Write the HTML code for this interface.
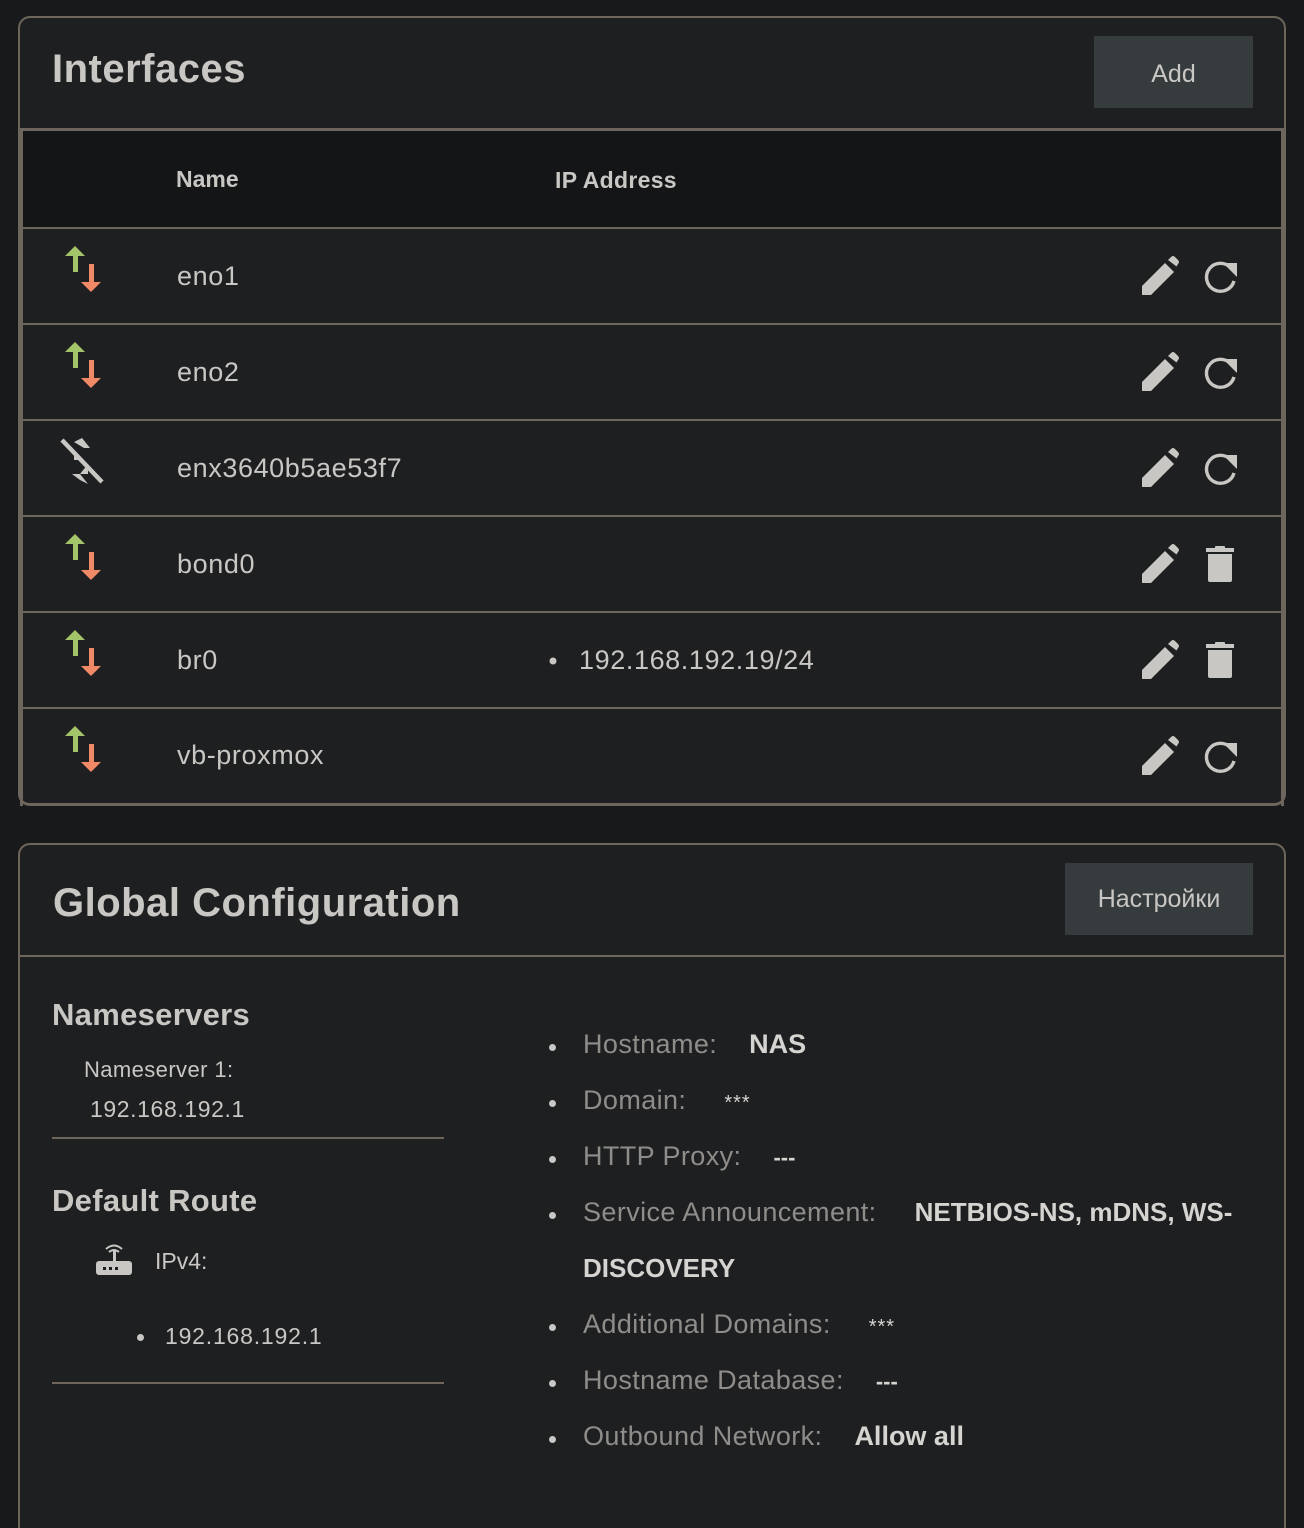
<!DOCTYPE html>
<html><head><meta charset="utf-8"><style>
*{box-sizing:border-box;margin:0;padding:0}
html{width:1304px;height:1528px;overflow:hidden}
body{width:1304px;height:1528px;background:#18191b;font-family:"Liberation Sans",sans-serif;color:#c9c7c4;position:relative;overflow:hidden}
.panel{position:absolute;left:18px;width:1268px;background:#1e1f21;border:2px solid #6e665c;border-radius:12px}
.abs{position:absolute}
.btn{position:absolute;background:#363b3d;color:#c9c7c4;font-size:25px;display:flex;align-items:center;justify-content:center}
.lbl{color:#8f8d8a;letter-spacing:0.4px}
.val{color:#d6d4d1;font-weight:bold}
.li{position:absolute;left:535px;font-size:27px}
.li:before{content:"";position:absolute;left:-34px;top:15px;width:7px;height:7px;border-radius:50%;background:#c9c7c4}
</style></head><body>
<div class="panel" style="top:16px;height:790px;border-bottom-width:3px">
  <div class="abs" style="left:32px;top:29px;font-size:40px;font-weight:bold;color:#c9c7c4;letter-spacing:0.5px">Interfaces</div>
  <div class="btn" style="left:1074px;top:18px;width:159px;height:72px;padding-top:4px">Add</div>
  <div class="abs" style="left:0;top:110px;width:1264px;height:100px;background:#141517;border-top:3px solid #6e665c"></div>
  <div class="abs" style="left:156px;top:148px;font-size:23px;font-weight:bold">Name</div>
  <div class="abs" style="left:535px;top:149px;font-size:23px;font-weight:bold;letter-spacing:0.3px">IP Address</div>
  <div class="abs" style="left:0;top:110px;width:3px;height:678px;background:#6e665c"></div>
  <div class="abs" style="right:0;top:110px;width:3px;height:678px;background:#6e665c"></div>
</div>
<svg width="0" height="0" style="position:absolute">
 <defs>
  <g id="ud"><path d="M10 0 L20 10 H13 V26 H8 V10 H0Z" fill="#a4c46a" transform="translate(-2,0)"/><path d="M26 46 L36 36 H29 V18 H24 V36 H16Z" fill="#f08a66" transform="translate(-2,0)"/></g>
  <g id="pen" fill="#c9c7c4"><path d="M0 36 V27 L23 4 L32 13 L9 36Z"/><path d="M26 1 L29 -2 Q31 -4 33 -2 L36 1 Q38 3 36 5 L34.5 7.5Z"/></g>
  <g id="ref"><path d="M28 8 A14 14 0 1 0 31 21" fill="none" stroke="#c9c7c4" stroke-width="3.4"/><path d="M20 3 H34 V17Z" fill="#c9c7c4"/></g>
  <g id="trash" fill="#c9c7c4"><rect x="0" y="2" width="28" height="4"/><rect x="9" y="0" width="10" height="3" rx="1"/><path d="M2 8 H26 V34 Q26 36 24 36 H4 Q2 36 2 34Z"/></g>
 </defs>
</svg>
<svg class="abs" style="left:0;top:0" width="1304" height="810">
 <rect x="21" y="227" width="1262" height="2" fill="#6e665c"/>
 <rect x="21" y="323" width="1262" height="2" fill="#6e665c"/>
 <rect x="21" y="419" width="1262" height="2" fill="#6e665c"/>
 <rect x="21" y="515" width="1262" height="2" fill="#6e665c"/>
 <rect x="21" y="611" width="1262" height="2" fill="#6e665c"/>
 <rect x="21" y="707" width="1262" height="2" fill="#6e665c"/>
 <use href="#ud" x="67" y="246"/>
 <use href="#ud" x="67" y="342"/>
 <g transform="translate(60,438)" fill="#c9c7c4"><path d="M2 2 L42 44" stroke="#c9c7c4" stroke-width="4.5"/><path d="M14 4 L22 0 L30 10 H24Z"/><path d="M14 12 V22 H22Z"/><path d="M28 26 V36 H20Z"/><path d="M12 36 H20 L28 46 L20 42Z"/></g>
 <use href="#ud" x="67" y="534"/>
 <use href="#ud" x="67" y="630"/>
 <use href="#ud" x="67" y="726"/>
 <g font-size="27" fill="#c9c7c4" font-family="Liberation Sans" letter-spacing="0.6">
  <text x="177" y="285">eno1</text><text x="177" y="381">eno2</text><text x="177" y="477">enx3640b5ae53f7</text>
  <text x="177" y="573">bond0</text><text x="177" y="669">br0</text><text x="177" y="764">vb-proxmox</text>
  <text x="579" y="669">192.168.192.19/24</text>
 </g>
 <circle cx="553" cy="661" r="3.5" fill="#c9c7c4"/>
 <use href="#pen" x="1142" y="259"/><use href="#pen" x="1142" y="355"/><use href="#pen" x="1142" y="451"/>
 <use href="#pen" x="1142" y="547"/><use href="#pen" x="1142" y="643"/><use href="#pen" x="1142" y="739"/>
 <use href="#ref" x="1203" y="260"/><use href="#ref" x="1203" y="356"/><use href="#ref" x="1203" y="452"/>
 <use href="#trash" x="1206" y="546"/><use href="#trash" x="1206" y="642"/>
 <use href="#ref" x="1203" y="740"/>
</svg>

<div class="panel" style="top:843px;height:700px">
  <div class="abs" style="left:33px;top:36px;font-size:40px;font-weight:bold;color:#c9c7c4;letter-spacing:0.5px">Global Configuration</div>
  <div class="btn" style="left:1045px;top:18px;width:188px;height:72px">Настройки</div>
  <div class="abs" style="left:0;top:110px;width:1264px;height:2px;background:#6e665c"></div>
  <div class="abs" style="left:32px;top:152px;font-size:31px;font-weight:bold;letter-spacing:0.3px">Nameservers</div>
  <div class="abs" style="left:64px;top:212px;font-size:22px;letter-spacing:0.4px">Nameserver 1:</div>
  <div class="abs" style="left:70px;top:251px;font-size:23px;letter-spacing:0.6px">192.168.192.1</div>
  <div class="abs" style="left:32px;top:292px;width:392px;height:2px;background:#6e665c"></div>
  <div class="abs" style="left:32px;top:338px;font-size:31px;font-weight:bold;letter-spacing:0.3px">Default Route</div>
  <svg class="abs" style="left:75px;top:396px" width="40" height="40"><g fill="#c9c7c4"><rect x="1" y="20" width="36" height="14" rx="3"/><rect x="18" y="10" width="3" height="11"/><path d="M11 8 Q19 1 27 8" stroke="#c9c7c4" stroke-width="2" fill="none"/><path d="M14 11 Q19 7 24 11" stroke="#c9c7c4" stroke-width="2" fill="none"/></g><g fill="#1e1f21"><rect x="8" y="26" width="3" height="3"/><rect x="14" y="26" width="3" height="3"/><rect x="20" y="26" width="3" height="3"/></g></svg>
  <div class="abs" style="left:135px;top:403px;font-size:23px">IPv4:</div>
  <div class="abs" style="left:117px;top:489px;width:7px;height:7px;border-radius:50%;background:#c9c7c4"></div>
  <div class="abs" style="left:145px;top:478px;font-size:23px;letter-spacing:0.8px">192.168.192.1</div>
  <div class="abs" style="left:32px;top:537px;width:392px;height:2px;background:#6e665c"></div>
</div>
<div class="li" style="left:583px;top:1029px"><span class="lbl">Hostname:</span><span class="val" style="margin-left:32px">NAS</span></div>
<div class="li" style="left:583px;top:1085px"><span class="lbl">Domain:</span><span style="margin-left:38px;font-size:20px;color:#d6d4d1;letter-spacing:1px">***</span></div>
<div class="li" style="left:583px;top:1141px"><span class="lbl">HTTP Proxy:</span><span class="val" style="margin-left:32px;font-size:22px">---</span></div>
<div class="li" style="left:583px;top:1197px"><span class="lbl">Service Announcement:</span><span class="val" style="margin-left:38px;font-size:26px">NETBIOS-NS, mDNS, WS-</span></div>
<div class="abs val" style="left:583px;top:1253px;font-size:26px">DISCOVERY</div>
<div class="li" style="left:583px;top:1309px"><span class="lbl">Additional Domains:</span><span style="margin-left:38px;font-size:20px;color:#d6d4d1;letter-spacing:1px">***</span></div>
<div class="li" style="left:583px;top:1365px"><span class="lbl">Hostname Database:</span><span class="val" style="margin-left:32px;font-size:22px">---</span></div>
<div class="li" style="left:583px;top:1421px"><span class="lbl">Outbound Network:</span><span class="val" style="margin-left:32px">Allow all</span></div>
</body></html>
